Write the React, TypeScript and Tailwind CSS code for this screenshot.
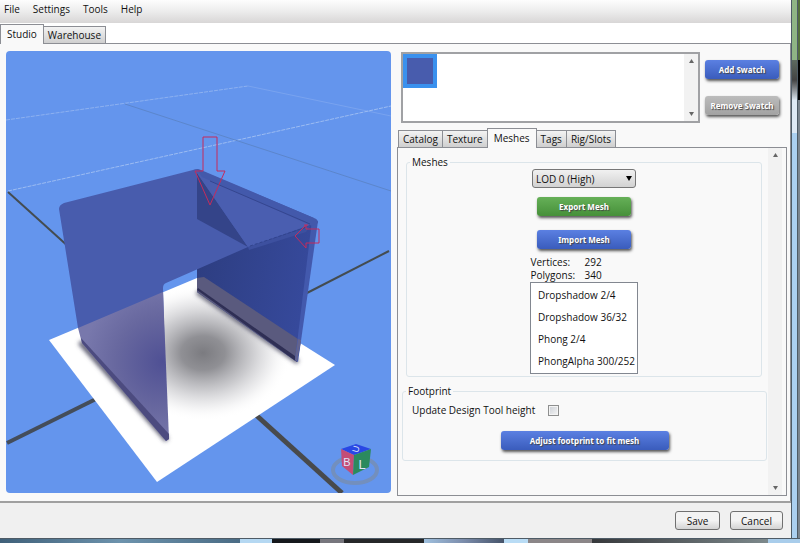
import { useState } from "react";
import type { ReactNode } from "react";
import clsx from "clsx";

const MENUS = ["File", "Settings", "Tools", "Help"];
const TABS = ["Catalog", "Texture", "Meshes", "Tags", "Rig/Slots"];
const MESH_GROUPS = ["Dropshadow 2/4", "Dropshadow 36/32", "Phong 2/4", "PhongAlpha 300/252"];

interface ActionButtonProps {
  children: ReactNode;
  color?: "blue" | "green" | "gray";
  className?: string;
}

function ActionButton({ children, color = "blue", className }: ActionButtonProps) {
  return (
    <button
      type="button"
      className={clsx(
        "h-[19px] rounded-[3px] font-['Noto_Sans','Open_Sans',sans-serif] text-[8px] leading-[18px] font-bold text-white whitespace-nowrap shadow-[1px_2px_3px_#555] [text-shadow:1px_1px_1px_#444]",
        color === "blue" && "bg-linear-to-b from-[#5b80e2] to-[#3a5cbc]",
        color === "green" && "bg-linear-to-b from-[#66b058] to-[#469039]",
        color === "gray" && "bg-linear-to-b from-[#bcbcbc] to-[#a2a2a2]",
        className
      )}
    >
      {children}
    </button>
  );
}

function ScrollTrack() {
  return (
    <div className="flex w-[14px] shrink-0 flex-col items-center justify-between bg-[#f2f2f2] py-[5px]">
      <svg width="5" height="4" viewBox="0 0 5 4">
        <path d="M0 4 L2.5 0 L5 4Z" fill="#666" />
      </svg>
      <svg width="5" height="4" viewBox="0 0 5 4">
        <path d="M0 0 L2.5 4 L5 0Z" fill="#666" />
      </svg>
    </div>
  );
}

interface TabProps {
  label: string;
  active: boolean;
  onSelect: () => void;
}

function Tab({ label, active, onSelect }: TabProps) {
  return (
    <button
      type="button"
      role="tab"
      aria-selected={active}
      onClick={onSelect}
      className={clsx(
        "-mr-px border border-[#8c8e94] whitespace-nowrap",
        active
          ? "z-10 -mb-px h-5 border-b-0 bg-[#f9f9f9] px-[6px] pb-[2px]"
          : "h-[17px] border-b-0 bg-linear-to-b from-[#f3f3f3] to-[#cfcfcf] px-[4px]"
      )}
    >
      {label}
    </button>
  );
}

function Viewport() {
  return (
    <svg
      viewBox="6 51 385 442"
      preserveAspectRatio="xMidYMid slice"
      className="h-full w-full rounded-[4px] bg-[#6495ed]"
      role="img"
      aria-label="Mesh preview"
    >
      <defs>
        <radialGradient id="shadow" cx="0.5" cy="0.5" r="0.5">
          <stop offset="0" stopColor="#7b7b80" />
          <stop offset="0.25" stopColor="#8a8a8f" stopOpacity="0.95" />
          <stop offset="0.55" stopColor="#a0a0a6" stopOpacity="0.55" />
          <stop offset="0.8" stopColor="#b4b4ba" stopOpacity="0.18" />
          <stop offset="1" stopColor="#fff" stopOpacity="0" />
        </radialGradient>
        <radialGradient id="leg" gradientUnits="userSpaceOnUse" cx="163" cy="362" r="80">
          <stop offset="0" stopColor="#4f5094" />
          <stop offset="0.6" stopColor="#68689f" />
          <stop offset="1" stopColor="#7878ac" />
        </radialGradient>
        <linearGradient id="side" x1="0" y1="0" x2="1" y2="0.3">
          <stop offset="0" stopColor="#2c3c7d" />
          <stop offset="1" stopColor="#36499b" />
        </linearGradient>
        <filter id="soft" x="-20%" y="-20%" width="140%" height="140%">
          <feGaussianBlur stdDeviation="2" />
        </filter>
        <clipPath id="floor">
          <path d="M49 340 L197 278 L335 365 L157 482Z" />
        </clipPath>
      </defs>

      {/* floor grid */}
      <path d="M6 120 L248 86" stroke="#8db1f0" strokeWidth="1" strokeDasharray="4 1" />
      <path d="M248 86 L391 116" stroke="#79a3ef" strokeWidth="1" />
      <path d="M8 191 L391 106" stroke="#9cbcf2" strokeWidth="1" strokeDasharray="4 1" />
      <path d="M125 104 L391 191" stroke="#5c86cb" strokeWidth="1" />
      <path d="M8 192 L70 248" stroke="#444c50" strokeWidth="2" />
      <path d="M305 294 L389 251" stroke="#444c50" strokeWidth="2" />
      <path d="M7 443 L96 399" stroke="#444d5a" strokeWidth="4" />
      <path d="M256 415 L342 493" stroke="#484a4c" strokeWidth="5" />

      <path d="M49 340 L197 278 L335 365 L157 482Z" fill="#fff" />
      <g clipPath="url(#floor)">
        <ellipse cx="203" cy="353" rx="88" ry="68" fill="url(#shadow)" />
        <path d="M80 342 L167 440" stroke="#55556a" strokeWidth="5" filter="url(#soft)" />
        <path d="M197 292 L298 362" stroke="#55556a" strokeWidth="4" filter="url(#soft)" />
      </g>

      {/* right side panel */}
      <path d="M197 172 L316 223 L297 362 L197 292Z" fill="url(#side)" />
      <path d="M197 278 L204 277 L301 341 L297 362 L197 292Z" fill="#5a5a7e" />
      <path d="M197 290 L198 288 L295 356 L297 362Z" fill="#2f2f55" />
      <path d="M312 220 L318 221 L298 362 L295 360Z" fill="#4359ad" />
      <path d="M301 340 L297 362 L295 360 L298 339Z" fill="#62638f" />

      {/* front panel, lighter where the floor shows through */}
      <path
        d="M59 209 Q59 205 64 203 L193 170 Q197 168 201 170 L314 218 L313 224 L248 247 L166 283 Q163 284 163 288 L165 360 L78 328Z"
        fill="#485cad"
      />
      <path d="M78 328 L163 292 L169 439 L166 441 L82 343Z" fill="url(#leg)" />
      <path d="M81 338 L169 434 L169 439 L166 441 L82 343Z" fill="#4c4b7f" />

      {/* top panel and folds */}
      <path d="M197 173 L248 247 L197 219Z" fill="#344489" />
      <path d="M197 173 L312 224 L248 247Z" fill="#4a5eb0" />
      <path d="M197 169 L314 218 Q318 219 318 223 L312 226 L202 177Z" fill="#4359ab" />
      <path d="M210 181 L310 224" stroke="#35468f" strokeWidth="1" />
      <path d="M248 247 L310 226 L306 232 L249 250Z" fill="#3d509f" />
      <path d="M250 246 L307 227" stroke="#33458e" strokeWidth="1" strokeDasharray="3 2" />

      {/* marker arrows */}
      <path
        d="M203 137 H217 V171 H225 L210 205 L195 171 H203Z M295 236 L306 225 V229 H319 V243 H306 V248Z M304 225 H308"
        fill="none"
        stroke="#c52b5c"
        strokeWidth="1"
      />

      {/* view cube */}
      <ellipse cx="355" cy="470" rx="22" ry="13" fill="none" stroke="#738fbd" strokeWidth="4" />
      <path d="M341 449 L356 444 L371 449 L354 455Z" fill="#2947e4" />
      <path d="M341 449 L354 455 L353 475 L342 466Z" fill="#c44d76" />
      <path d="M354 455 L371 449 L369 467 L353 475Z" fill="#2b8a5e" />
      <g className="font-['Liberation_Sans',sans-serif]" fill="#dfe5fa" textAnchor="middle">
        <text x="356" y="452" fontSize="9" transform="rotate(-75 356 449)">U</text>
        <text x="347" y="466" fontSize="11">B</text>
        <text x="362" y="469" fontSize="13">L</text>
      </g>
    </svg>
  );
}

function MeshesPanel() {
  return (
    <div className="min-w-0 flex-1 pr-px pl-[4px] pt-[8px]">
      <fieldset className="mr-[5px] ml-[4px] flex h-[221px] flex-col items-center rounded-[3px] border border-[#dce5ea] px-2">
        <legend className="-ml-[5px] h-[13px] px-[2px] leading-[13px]">Meshes</legend>
        <div className="relative h-[19px] w-[104px] shrink-0">
          <select
            aria-label="Level of detail"
            defaultValue="0"
            className="h-full w-full appearance-none rounded-[3px] border border-[#777] bg-linear-to-b from-[#f1f1f1] to-[#d2d2d2] pl-[3px] leading-[16px]"
          >
            <option value="0">LOD 0 (High)</option>
            <option value="1">LOD 1 (Medium)</option>
          </select>
          <svg className="pointer-events-none absolute top-[7px] right-[4px]" width="6" height="5" viewBox="0 0 6 5">
            <path d="M0 0 H6 L3 5Z" fill="#000" />
          </svg>
        </div>
        <ActionButton color="green" className="mt-[9px] w-[94px] shrink-0">Export Mesh</ActionButton>
        <ActionButton className="mt-[14px] w-[94px] shrink-0">Import Mesh</ActionButton>
        <dl className="mt-[7px] grid w-[107px] grid-cols-[54px_1fr] leading-[13px]">
          <dt>Vertices:</dt>
          <dd>292</dd>
          <dt>Polygons:</dt>
          <dd>340</dd>
        </dl>
        <ul className="w-[108px] border border-[#828790] bg-white pt-[2px] pl-[7px]">
          {MESH_GROUPS.map((name) => (
            <li key={name} className="h-[22px] leading-[20px] whitespace-nowrap">
              {name}
            </li>
          ))}
        </ul>
      </fieldset>

      <fieldset className="mt-[8px] h-[76px] rounded-[3px] border border-[#dce5ea] px-[9px]">
        <legend className="-ml-[6px] h-[13px] px-[2px] leading-[13px]">Footprint</legend>
        <div className="flex h-[19px] items-center gap-[13px] pt-[5px]">
          <label htmlFor="update-height" className="whitespace-nowrap">Update Design Tool height</label>
          <input
            id="update-height"
            type="checkbox"
            className="h-[11px] w-[11px] appearance-none border border-[#8e8f8f] bg-linear-to-br from-[#cbcfd5] to-[#f6f6f6] outline-1 -outline-offset-2 outline-[#f4f4f4] checked:bg-[#3a5cbc]"
          />
        </div>
        <div className="mt-[14px] flex justify-center">
          <ActionButton className="w-[168px]">Adjust footprint to fit mesh</ActionButton>
        </div>
      </fieldset>
    </div>
  );
}

export default function App() {
  const [page, setPage] = useState("Studio");
  const [tab, setTab] = useState("Meshes");

  return (
    <div className="flex min-h-screen flex-col bg-[#35434f] font-['Open_Sans','Noto_Sans',sans-serif] text-[10px] leading-[14px] text-[#111]">
      <div className="flex flex-1">
        <div className="flex min-w-0 flex-1 flex-col bg-white">
          <nav className="flex h-[23px] items-start gap-[13px] bg-linear-to-b from-[#fdfdfd] via-[#ececec] to-[#d8d6d6] px-[4px] pt-[2px]">
            {MENUS.map((menu) => (
              <button key={menu} type="button">{menu}</button>
            ))}
          </nav>

          <div role="tablist" className="flex h-[21px] items-end border-b border-[#8c8e94]">
            {["Studio", "Warehouse"].map((name) => (
              <Tab key={name} label={name} active={page === name} onSelect={() => setPage(name)} />
            ))}
          </div>

          <main className="grid flex-1 grid-cols-[385fr_390fr] gap-[6px] border-r border-[#8c8e94] bg-[#f9f9f9] pt-[7px] pr-[3px] pb-[5px] pl-[6px]">
            <div className="pb-[3px]">
              <Viewport />
            </div>

            <div className="flex min-w-0 flex-col pt-px">
              <div className="flex gap-[5px] pr-2 pl-[4px]">
                <div className="flex h-[71px] min-w-0 flex-1 justify-between border-2 border-[#a0a1a4] bg-white">
                  <button
                    type="button"
                    aria-label="Swatch 1"
                    className="h-[34px] w-[34px] border-4 border-[#3a91ee] bg-[#485cad]"
                  />
                  <ScrollTrack />
                </div>
                <div className="flex flex-col gap-[17px] pt-[8px]">
                  <ActionButton className="w-[74px]">Add Swatch</ActionButton>
                  <ActionButton color="gray" className="w-[74px]">Remove Swatch</ActionButton>
                </div>
              </div>

              <div role="tablist" className="mt-[5px] flex h-[19px] items-end pl-px">
                {TABS.map((name) => (
                  <Tab key={name} label={name} active={tab === name} onSelect={() => setTab(name)} />
                ))}
              </div>
              <div className="flex flex-1 border border-[#8c8e94] pr-[4px]">
                <MeshesPanel />
                <ScrollTrack />
              </div>
            </div>
          </main>

          <footer className="flex h-[37px] items-center justify-end gap-[10px] border-t-2 border-[#a0a0a0] bg-[#f0f0f0] pr-2">
            <button
              type="button"
              className="h-[19px] w-[45px] rounded-[3px] border border-[#707070] bg-linear-to-b from-[#f3f3f3] from-50% to-[#d3d3d3] leading-[16px]"
            >
              Save
            </button>
            <button
              type="button"
              className="h-[19px] w-[53px] rounded-[3px] border border-[#707070] bg-linear-to-b from-[#f3f3f3] from-50% to-[#d3d3d3] leading-[16px]"
            >
              Cancel
            </button>
          </footer>
        </div>

        {/* glass window frame */}
        <div className="flex w-[9px] shrink-0">
          <div className="w-px bg-[#4e5b66]" />
          <div className="flex w-[5px] flex-col">
            <div className="h-[60px] bg-[#8fb585]" />
            <div className="h-[40px] bg-linear-to-b from-[#5d6a60] via-[#444] to-[#dce6f0]" />
            <div className="h-[33px] bg-[#dfeaf5]" />
            <div className="flex-1 bg-[#abd0f0]" />
          </div>
          <div className="w-px bg-[#4e5b66]" />
          <div className="flex flex-1 flex-col">
            <div className="h-[60px] bg-[#54703c]" />
            <div className="h-[40px] bg-black" />
            <div className="flex-1 bg-[#7b858e]" />
          </div>
        </div>
      </div>
      <div className="flex h-[5px] border-t border-[#4e5b66]">
        <div className="w-[30%] bg-linear-to-r from-[#3f6079] via-[#6d93ad] to-[#4a6c85]" />
        <div className="w-[4%] bg-[#b5d8f2]" />
        <div className="w-[6%] bg-[#15181c]" />
        <div className="w-[3%] bg-[#77767d]" />
        <div className="w-[10%] bg-[#262729]" />
        <div className="w-[10%] bg-linear-to-r from-[#9fc0de] via-[#7b8cab] to-[#46546a]" />
        <div className="w-[3%] bg-[#b9dcf5]" />
        <div className="w-[8%] bg-[#8b8688]" />
        <div className="w-[22%] bg-linear-to-r from-[#37393c] to-[#7d898c]" />
        <div className="flex-1 bg-[#a9cdeb]" />
      </div>
    </div>
  );
}
